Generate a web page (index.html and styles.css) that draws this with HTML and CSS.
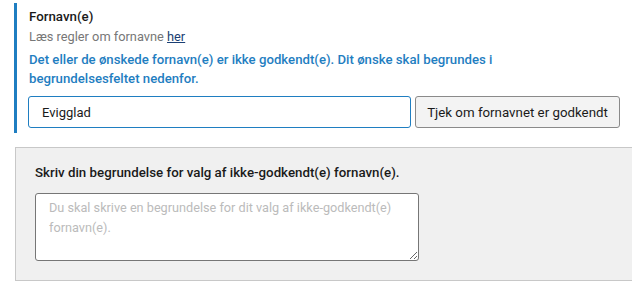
FILE: index.html
```html
<!DOCTYPE html>
<html lang="da">
<head>
    <meta charset="UTF-8">
    <meta name="viewport" content="width=device-width, initial-scale=1.0">
    <title>Fornavn</title>
    <link rel="stylesheet" href="styles.css">
</head>
<body>
    <div class="name-field">
        <div class="field-label">Fornavn(e)</div>
        <div class="field-hint">Læs regler om fornavne <a href="#">her</a></div>
        <div class="field-error">Det eller de ønskede fornavn(e) er ikke godkendt(e). Dit ønske skal begrundes i begrundelsesfeltet nedenfor.</div>

        <div class="name-row">
            <input type="text" class="name-input" value="Evigglad">
            <button class="check-button">Tjek om fornavnet er godkendt</button>
        </div>
    </div>

    <div class="reason-panel">
        <label for="reason" class="reason-label">Skriv din begrundelse for valg af ikke-godkendt(e) fornavn(e).</label>
        <textarea id="reason" class="reason-text" placeholder="Du skal skrive en begrundelse for dit valg af ikke-godkendt(e) fornavn(e)."></textarea>
    </div>
</body>
</html>
```

FILE: styles.css
```css
body {
    margin: 0;
    font-family: Roboto, sans-serif;
    font-size: 13.3px;
    color: #1a1a1a;
    background-color: #fff;
    overflow-x: hidden;
}

.name-field {
    margin: 3px 0 0 14px;
    padding: 4px 0 5px 12px;
    border-left: 3px solid #1f7ec1;
}

.field-label {
    font-weight: 500;
    line-height: 20px;
}

.field-hint {
    color: #777;
    font-size: 12.8px;
    line-height: 20px;
}
.field-hint a {
    color: #1b3f73;
}

.field-error {
    margin-top: 3px;
    width: 480px;
    color: #1f7ec1;
    font-size: 13.2px;
    font-weight: 500;
    line-height: 19px;
}

.name-row {
    display: flex;
    gap: 4px;
    margin: 8px 0 0 -1px;
}

.name-input {
    width: 383px;
    height: 32px;
    box-sizing: border-box;
    padding: 0 13px;
    border: 1px solid #1f7ec1;
    border-radius: 3px;
    font: inherit;
    font-size: 13px;
    color: #1a1a1a;
}

.check-button {
    width: 205px;
    height: 32px;
    padding: 0;
    background-color: #f3f3f3;
    border: 1px solid #8a8a8a;
    border-radius: 3px;
    font: inherit;
    color: #1a1a1a;
}

.reason-panel {
    width: 640px;
    margin: 14px 0 0 15px;
    padding: 15px 19px 19px;
    box-sizing: border-box;
    background-color: #f0f0f0;
    border: 1px solid #c8c8c8;
}

.reason-label {
    display: block;
    font-weight: 500;
    line-height: 20px;
    margin-bottom: 10px;
}

.reason-text {
    display: block;
    width: 384px;
    height: 68px;
    box-sizing: border-box;
    padding: 4px 8px 4px 13px;
    border: 1px solid #767676;
    border-radius: 3px;
    font: inherit;
    font-size: 12.7px;
    line-height: 20px;
    resize: vertical;
}
.reason-text::placeholder {
    color: #bbb;
}
```
